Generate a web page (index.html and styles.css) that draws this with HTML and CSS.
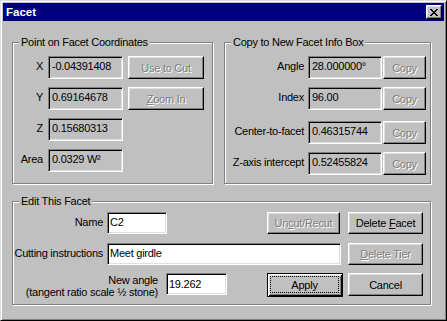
FILE: index.html
```html
<!DOCTYPE html>
<html>
<head>
<meta charset="utf-8">
<title>Facet</title>
<link rel="stylesheet" href="styles.css">
</head>
<body>
<div class="window">
  <div class="titlebar">
    <span class="title">Facet</span>
    <div class="close">
      <svg width="8" height="7" viewBox="0 0 8 7" shape-rendering="crispEdges">
        <path d="M0 0h2v1h-2zM6 0h2v1h-2zM1 1h2v1h-2zM5 1h2v1h-2zM2 2h4v1h-4zM3 3h2v1h-2zM2 4h4v1h-4zM1 5h2v1h-2zM5 5h2v1h-2zM0 6h2v1h-2zM6 6h2v1h-2z" fill="#000"/>
      </svg>
    </div>
  </div>
  <div class="client">
    <div class="top-row">
      <div class="group group-point">
        <div class="legend">Point on Facet Coordinates</div>
        <div class="point-grid">
          <span class="lbl">X</span><div class="field ro">-0.04391408</div><div class="btn disabled"><span>Use to Cut</span></div>
          <span class="lbl">Y</span><div class="field ro">0.69164678</div><div class="btn disabled"><span><u>Z</u>oom In</span></div>
          <span class="lbl">Z</span><div class="field ro">0.15680313</div>
          <span class="lbl">Area</span><div class="field ro">0.0329 W²</div>
        </div>
      </div>
      <div class="group group-copy">
        <div class="legend">Copy to New Facet Info Box</div>
        <div class="copy-grid">
          <span class="lbl">Angle</span><div class="field ro">28.000000°</div><div class="btn copy disabled"><span>Copy</span></div>
          <span class="lbl">Index</span><div class="field ro">96.00</div><div class="btn copy disabled"><span>Copy</span></div>
          <span class="lbl">Center-to-facet</span><div class="field ro">0.46315744</div><div class="btn copy disabled"><span>Copy</span></div>
          <span class="lbl">Z-axis intercept</span><div class="field ro">0.52455824</div><div class="btn copy disabled"><span>Copy</span></div>
        </div>
      </div>
    </div>
    <div class="group group-edit">
      <div class="legend">Edit This Facet</div>
      <div class="edit-grid">
        <span class="lbl">Name</span>
        <div class="name-row">
          <div class="field edit name-field">C2</div>
          <div class="btn disabled uncut"><span>Un<u>c</u>ut/Recut</span></div>
        </div>
        <div class="btn side"><span>Delete <u>F</u>acet</span></div>

        <span class="lbl">Cutting instructions</span>
        <div class="field edit cut-field">Meet girdle</div>
        <div class="btn side disabled"><span><u>D</u>elete Tier</span></div>

        <div class="angle-row">
          <div class="angle-lbl">New angle<br>(tangent ratio scale ½ stone)</div>
          <div class="field edit angle-field">19.262</div>
          <div class="btn default"><span class="focus">Apply</span></div>
        </div>
        <div class="btn side cancel"><span>Cancel</span></div>
      </div>
    </div>
  </div>
</div>
</body>
</html>
```
FILE: styles.css
```css
* { box-sizing: border-box; }
html, body { margin: 0; padding: 0; }
body {
  background: #c0c0c0;
  font-family: "Liberation Sans", Arial, sans-serif;
  font-size: 11px;
  letter-spacing: -0.25px;
  color: #000;
}
u { text-decoration: underline; text-underline-offset: 1px; }

.window {
  width: 447px;
  height: 321px;
  background: #c0c0c0;
  border: 1px solid;
  border-color: #dfdfdf #000 #000 #dfdfdf;
  box-shadow: inset 1px 1px #fff, inset -1px -1px #808080;
  padding: 2px;
  display: flex;
  flex-direction: column;
}

.titlebar {
  height: 18px;
  background: #000080;
  color: #fff;
  display: flex;
  align-items: center;
  justify-content: space-between;
  padding: 0 2px 0 3px;
}
.title { font-weight: bold; font-size: 11.5px; letter-spacing: 0; }
.close {
  width: 16px;
  height: 14px;
  background: #c0c0c0;
  border: 1px solid;
  border-color: #fff #000 #000 #fff;
  box-shadow: inset -1px -1px #808080, inset 1px 1px #dfdfdf;
  display: flex;
  align-items: center;
  justify-content: center;
  padding-right: 1px;
}
.close svg { display: block; }

.client { padding: 21px 0 0 9px; }
.top-row { display: flex; gap: 11px; }

.group {
  border: 1px solid #808080;
  box-shadow: inset 1px 1px #fff, 1px 1px #fff;
  display: flex;
  flex-direction: column;
  align-items: flex-start;
}
.top-row .group { height: 142px; }
.group-point { width: 201px; }
.group-copy { width: 207px; }
.group-edit { width: 419px; height: 104px; margin-top: 17px; }

.legend {
  margin: -7px 0 0 6px;
  padding: 0 2px;
  background: #c0c0c0;
  line-height: 13px;
  white-space: nowrap;
}

.lbl {
  grid-column: 1;
  text-align: right;
  line-height: 20px;
  white-space: nowrap;
  align-self: start;
}

.field {
  height: 23px;
  border: 1px solid;
  border-color: #808080 #fff #fff #808080;
  box-shadow: inset 1px 1px #000, inset -1px -1px #dfdfdf;
  line-height: 17px;
  padding: 1px 3px 0;
  white-space: nowrap;
  overflow: hidden;
}
.field.ro { background: #c0c0c0; }
.field.edit { background: #fff; height: 22px; padding-left: 2px; }

.btn {
  height: 23px;
  background: #c0c0c0;
  border: 1px solid;
  border-color: #fff #000 #000 #fff;
  box-shadow: inset -1px -1px #808080, inset 1px 1px #dfdfdf;
  display: flex;
  align-items: center;
  justify-content: center;
  white-space: nowrap;
}
.btn.disabled {
  color: #808080;
  text-shadow: 1px 1px 0 #fff;
}

.point-grid {
  margin-top: 7px;
  padding-left: 3px;
  display: grid;
  grid-template-columns: 27px 75px 76px;
  grid-auto-rows: 23px;
  column-gap: 5px;
  row-gap: 8px;
}

.copy-grid {
  margin-top: 7px;
  display: grid;
  grid-template-columns: 83px 74px 44px;
  grid-template-rows: 23px 23px 26px 23px;
  row-gap: 8px;
  align-items: end;
}
.copy-grid .lbl { padding-right: 4px; align-self: end; margin-bottom: 3px; }
.btn.copy { width: 43px; justify-self: end; }

.edit-grid {
  margin-top: 4px;
  display: grid;
  grid-template-columns: 94px 234px 82px;
  grid-template-rows: 23px 22px 24px;
  row-gap: 8px;
  align-items: start;
}
.edit-grid .lbl { padding-right: 4px; line-height: 20px; }
.name-row { display: flex; justify-content: space-between; }
.name-field { width: 60px; }
.btn.uncut { width: 73px; height: 22px; margin-right: 1px; }
.btn.side { width: 75px; height: 22px; justify-self: end; }
.btn.cancel { height: 23px; }
.cut-field { width: 234px; }

.angle-row {
  grid-column: 1 / 3;
  display: flex;
  align-items: flex-start;
}
.angle-lbl {
  width: 145px;
  text-align: right;
  line-height: 12px;
  padding-top: 1px;
  white-space: nowrap;
}
.angle-field { width: 61px; height: 23px; margin-left: 8px; padding-left: 5px; padding-top: 2px; }
.btn.default {
  width: 76px;
  height: 24px;
  margin-left: auto;
  margin-right: -2px;
  border: 1px solid #000;
  box-shadow: inset 1px 1px #fff, inset -1px -1px #000, inset 2px 2px #dfdfdf, inset -2px -2px #808080;
  padding: 2px 3px 3px 2px;
}
.focus {
  width: 100%;
  height: 100%;
  border: 1px dotted #000;
  display: flex;
  align-items: center;
  justify-content: center;
}
```
